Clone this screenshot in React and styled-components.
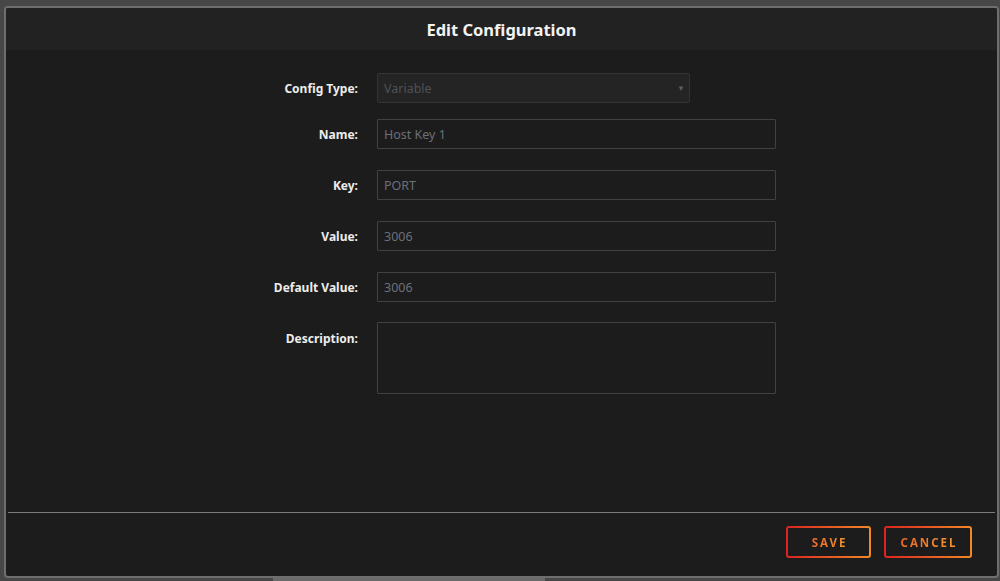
import React from "react";
import styled, { createGlobalStyle } from "styled-components";

const GlobalStyle = createGlobalStyle`
  html, body {
    margin: 0;
    padding: 0;
    height: 100%;
    background: #474747;
    font-family: "Noto Sans", "Open Sans", Arial, sans-serif;
  }
  #root {
    height: 100%;
  }
`;

const fields = [
  { label: "Name:", value: "Host Key 1", space: 21 },
  { label: "Key:", value: "PORT", space: 21 },
  { label: "Value:", value: "3006", space: 21 },
  { label: "Default Value:", value: "3006", space: 20 },
];

const App = () => {
  return (
    <>
      <GlobalStyle />
      <Page>
        <Modal>
          <Header>
            <Title>Edit Configuration</Title>
          </Header>
          <Body>
            <Row $space={16}>
              <Label>Config Type:</Label>
              <SelectWrap>
                <Select disabled defaultValue="variable">
                  <option value="variable">Variable</option>
                </Select>
                <Arrow>▼</Arrow>
              </SelectWrap>
            </Row>
            {fields.map((field) => (
              <Row key={field.label} $space={field.space}>
                <Label>{field.label}</Label>
                <Input defaultValue={field.value} />
              </Row>
            ))}
            <Row $space={0} $top>
              <Label $top>Description:</Label>
              <TextArea />
            </Row>
          </Body>
          <Divider />
          <Footer>
            <Button>
              <ButtonText>SAVE</ButtonText>
            </Button>
            <Button $wide>
              <ButtonText>CANCEL</ButtonText>
            </Button>
          </Footer>
        </Modal>
        <ScrollThumb />
      </Page>
    </>
  );
};

const Page = styled.div`
  position: relative;
  box-sizing: border-box;
  height: 581px;
  padding: 6px 1px 3px 4px;
  display: flex;
`;

const Modal = styled.div`
  flex: 1;
  display: flex;
  flex-direction: column;
  background: #1d1c1d;
  border: 2px solid #6e6e6e;
  border-radius: 4px;
  overflow: hidden;
`;

const Header = styled.div`
  height: 42px;
  background: #222222;
  display: flex;
  align-items: center;
  justify-content: center;
`;

const Title = styled.h1`
  margin: 0;
  font-size: 16.5px;
  font-weight: 700;
  color: #f2f2f2;
`;

const Body = styled.div`
  flex: 1;
  padding-top: 23px;
  display: flex;
  flex-direction: column;
`;

const Row = styled.div`
  display: flex;
  align-items: ${(p) => (p.$top ? "flex-start" : "center")};
  gap: 19px;
  margin-bottom: ${(p) => p.$space}px;
`;

const Label = styled.label`
  width: 150px;
  margin-left: 202px;
  text-align: right;
  font-size: 12px;
  font-weight: 700;
  color: #ececec;
  padding-top: ${(p) => (p.$top ? "8px" : "0")};
`;

const fieldBase = `
  box-sizing: border-box;
  font-family: "Noto Sans", "Open Sans", Arial, sans-serif;
  font-size: 12.5px;
  color: #6b7079;
  outline: none;
`;

const SelectWrap = styled.div`
  position: relative;
  width: 313px;
  height: 30px;
`;

const Select = styled.select`
  ${fieldBase}
  width: 100%;
  height: 100%;
  appearance: none;
  background: #242424;
  border: 1px solid #333333;
  border-radius: 2px;
  padding: 0 6px;
  color: #4e5157;
  opacity: 1;
`;

const Arrow = styled.span`
  position: absolute;
  right: 5px;
  top: 9px;
  font-size: 8px;
  color: #575c66;
  pointer-events: none;
`;

const Input = styled.input`
  ${fieldBase}
  width: 399px;
  height: 30px;
  background: #1d1c1d;
  border: 1px solid #3f4146;
  border-radius: 1px;
  padding: 0 6px;
`;

const TextArea = styled.textarea`
  ${fieldBase}
  width: 399px;
  height: 72px;
  background: #1d1c1d;
  border: 1px solid #3f4146;
  border-radius: 1px;
  padding: 6px 7px;
  resize: none;
`;

const Divider = styled.div`
  height: 1px;
  margin: 0 2px;
  background: #7a7a7a;
`;

const Footer = styled.div`
  display: flex;
  justify-content: flex-end;
  gap: 13px;
  padding: 13px 25px 18px;
`;

const Button = styled.button`
  box-sizing: border-box;
  width: ${(p) => (p.$wide ? "88px" : "85px")};
  height: 32px;
  border: 2px solid transparent;
  border-radius: 3px;
  background: linear-gradient(#1d1c1d, #1d1c1d) padding-box,
    linear-gradient(90deg, #dc2320, #f08a26) border-box;
  display: flex;
  align-items: center;
  justify-content: center;
  padding: 0;
  cursor: pointer;
`;

const ButtonText = styled.span`
  font-family: "Noto Sans", "Open Sans", Arial, sans-serif;
  font-size: 11.5px;
  font-weight: 700;
  letter-spacing: 2px;
  margin-right: -2px;
  background: linear-gradient(90deg, #ec6a27, #f39530);
  -webkit-background-clip: text;
  background-clip: text;
  color: transparent;
`;

const ScrollThumb = styled.div`
  position: absolute;
  left: 273px;
  bottom: 0;
  width: 272px;
  height: 3px;
  background: #6a6a6a;
`;

export default App;
